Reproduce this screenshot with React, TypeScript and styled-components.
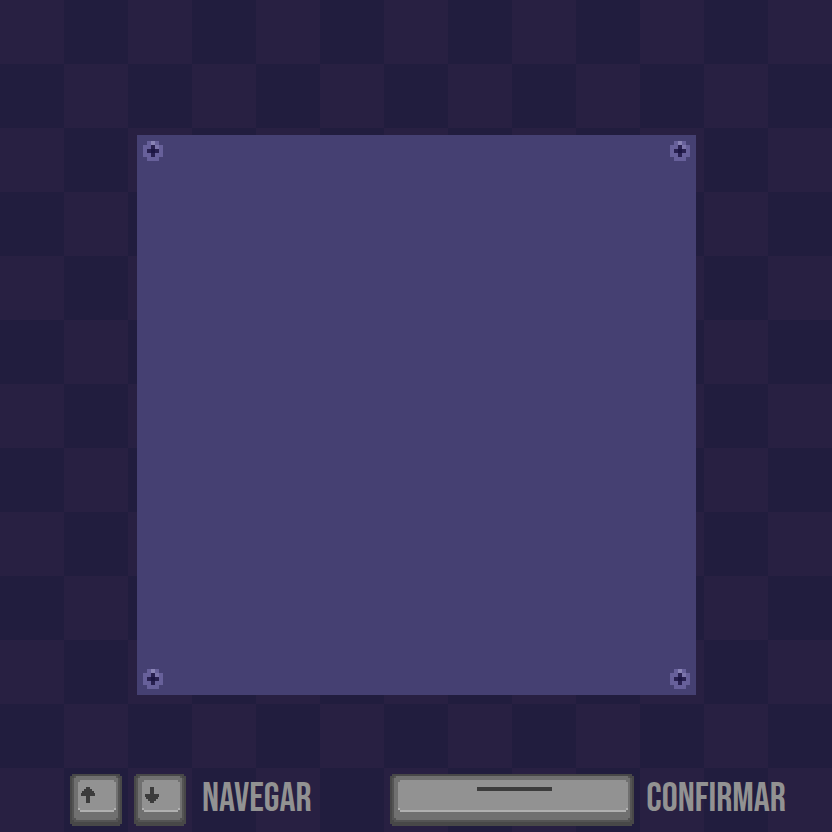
import React from 'react';
import styled, { createGlobalStyle } from 'styled-components';

const GlobalStyle = createGlobalStyle`
  * { box-sizing: border-box; }
  html, body, #root { height: 100%; margin: 0; }
  body { background: #211d3e; }
`;

const Screen = styled.main`
  min-height: 100%;
  display: grid;
  grid-template-rows: 1fr auto;
  padding: 135px 46px 6px;
  gap: 79px;
  overflow: hidden;
  background: conic-gradient(#211d3e 25%, #282042 0 50%, #211d3e 0 75%, #282042 0) 0 0 / 128px 128px;
`;

const Panel = styled.section`
  margin: 0 90px 0 91px;
  display: grid;
  grid-template-columns: auto auto;
  justify-content: space-between;
  align-content: space-between;
  padding: 6px;
  background: #454072;
`;

const ScrewDrawing = styled.svg`
  display: block;
  width: 20px;
  height: 20px;
`;

const Controls = styled.footer`
  display: flex;
  justify-content: space-between;
  padding-left: 24px;
`;

const Group = styled.div`
  display: flex;
  gap: 12px;
`;

const KeyButton = styled.button`
  display: block;
  padding: 0;
  border: 0;
  background: none;
  cursor: pointer;
`;

const KeyDrawing = styled.svg`
  display: block;
`;

const Label = styled.span<{ $spaced?: boolean }>`
  padding-left: ${({ $spaced }) => ($spaced ? 4 : 0)}px;
  color: #929292;
  font: 400 40px/50px "Bebas Neue", "Liberation Sans Narrow", "Liberation Sans", sans-serif;
`;

function Screw() {
  return (
    <ScrewDrawing viewBox="0 0 10 10" shapeRendering="crispEdges" aria-hidden="true">
      <path fill="#67609a" d="M2 0h6v2h2v6h-2v2h-6v-2h-2v-6h2z" />
      <path fill="#8983b5" d="M4 0h2v2h-2z" />
      <path fill="#7b74aa" d="M6 2h2v2h-2z" />
      <path fill="#28204f" d="M4 2h2v2h2v2h-2v2h-2v-2h-2v-2h2z" />
      <path fill="#1c1643" d="M4 4h2v2h-2z" />
    </ScrewDrawing>
  );
}

function Key({ units, label, children }: { units: number; label: string; children: React.ReactNode }) {
  const w = units;
  return (
    <KeyButton type="button" aria-label={label}>
      <KeyDrawing width={w * 2} height={52} viewBox={`0 0 ${w} 26`} shapeRendering="crispEdges">
        <path fill="#484848" d={`M1 0H${w - 1}V1H${w}V25H${w - 1}V26H1V25H0V1H1z`} />
        <path fill="#545454" d={`M2 1H${w - 2}V2H${w - 1}V23H${w - 2}V24H2V23H1V2H2z`} />
        <path fill="#707070" d={`M3 1H${w - 3}V2H${w - 2}V22H${w - 3}V23H3V22H2V2H3z`} />
        <path fill="#929292" d={`M5 3H${w - 4}V4H${w - 3}V18H${w - 4}V19H5V18H4V4H5z`} />
        <path fill="#b0b0b0" d={`M5 18H${w - 4}V19H5zM4 17h1v1h-1zM${w - 4} 17h1v1h-1z`} />
        {children}
      </KeyDrawing>
    </KeyButton>
  );
}

export default function App() {
  return (
    <>
      <GlobalStyle />
      <Screen>
        <Panel>
          <Screw />
          <Screw />
          <Screw />
          <Screw />
        </Panel>
        <Controls>
          <Group>
            <Key units={26} label="Arriba">
              <path fill="#3c3c3c" d="M8 6.5h2v1h1v1h1v1h.5v1.5h-2.5v3.5h-2v-3.5h-2.5v-1.5h.5v-1h1v-1h1z" />
            </Key>
            <Key units={26} label="Abajo">
              <path fill="#3c3c3c" d="M8 14.5h2v-1h1v-1h1v-1h.5v-1.5h-2.5v-3.5h-2v3.5h-2.5v1.5h.5v1h1v1h1z" />
            </Key>
            <Label $spaced>NAVEGAR</Label>
          </Group>
          <Group>
            <Key units={122} label="Espacio">
              <path fill="#3c3c3c" d="M43.5 6.5h37.5v2h-37.5z" />
            </Key>
            <Label>CONFIRMAR</Label>
          </Group>
        </Controls>
      </Screen>
    </>
  );
}
